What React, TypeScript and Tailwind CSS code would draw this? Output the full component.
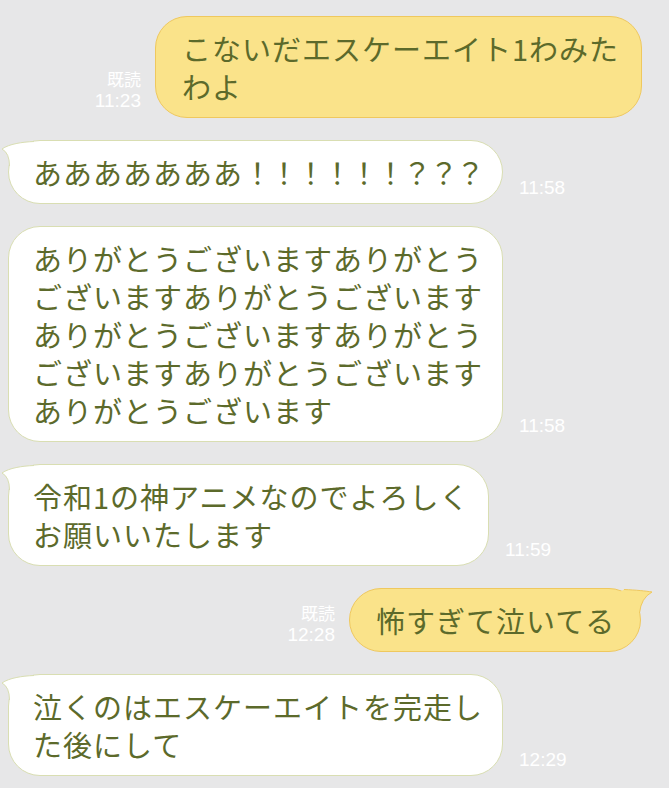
import React from "react";

const textFont = {
  fontFamily: '"Noto Sans CJK JP", "Noto Sans", sans-serif',
};

const timeFont = {
  fontFamily: '"Liberation Sans", Arial, sans-serif',
};

function LeftTail() {
  return (
    <svg
      className="absolute left-[-8px] top-0 overflow-visible"
      width="40"
      height="30"
      viewBox="0 0 40 30"
    >
      <path d="M33 0.5 C21 1 8 3 1 8 Q8.5 12 8.5 25 L20 25 L36 4 Z" fill="#ffffff" />
      <path d="M33 0.5 C21 1 8 3 1 8 Q8.5 12 8.5 25" fill="none" stroke="#d9deb2" strokeWidth="1" />
    </svg>
  );
}

function RightTail() {
  return (
    <svg
      className="absolute right-[-16px] top-0 overflow-visible"
      width="56"
      height="30"
      viewBox="0 0 56 30"
    >
      <path d="M24 0.5 C36 1 46 2 52 3 Q41 9 39.5 24 L28 24 L18 4 Z" fill="#fae38a" />
      <path d="M24 0.5 C36 1 46 2 52 3 Q41 9 39.5 24" fill="none" stroke="#efc85e" strokeWidth="1" />
    </svg>
  );
}

function Time({ t }: { t: string }) {
  return (
    <div className="mb-[5px] text-[19px] leading-[22px] text-white" style={timeFont}>
      {t}
    </div>
  );
}

function LeftMsg({
  lines,
  time,
  width,
  tail,
}: {
  lines: React.ReactNode[];
  time: string;
  width: string;
  tail?: boolean;
}) {
  return (
    <div className="flex items-end gap-[16px] pl-[8px]">
      <div
        className={`relative rounded-[32px] border border-[#d9deb2] bg-white py-[12px] pl-[24px] text-[29px] leading-[38px] tracking-[1px] text-[#5c6a2b] ${width}`}
        style={textFont}
      >
        {tail && <LeftTail />}
        {lines.map((l, i) => (
          <div key={i} className="relative whitespace-nowrap">
            {l}
          </div>
        ))}
      </div>
      <Time t={time} />
    </div>
  );
}

function RightMsg({
  lines,
  time,
  width,
  pad,
  tail,
}: {
  lines: string[];
  time: string;
  width: string;
  pad: string;
  tail?: boolean;
}) {
  return (
    <div className={`flex items-end justify-end gap-[14px] ${pad}`}>
      <div className="mb-[6px] text-right text-white">
        <div className="text-[17px] leading-[23px]" style={textFont}>
          既読
        </div>
        <div className="text-[19px] leading-[22px]" style={timeFont}>
          {time}
        </div>
      </div>
      <div
        className={`relative rounded-[32px] border border-[#efc85e] bg-[#fae38a] py-[12px] pl-[26px] text-[29px] leading-[38px] tracking-[1px] text-[#5c6a2b] ${width}`}
        style={textFont}
      >
        {tail && <RightTail />}
        {lines.map((l, i) => (
          <div key={i} className="relative whitespace-nowrap">
            {l}
          </div>
        ))}
      </div>
    </div>
  );
}

export default function App() {
  return (
    <div className="flex min-h-screen w-[669px] flex-col gap-[22px] overflow-hidden bg-[#e7e7e8] pt-[16px]">
      <RightMsg
        lines={["こないだエスケーエイト1わみた", "わよ"]}
        time="11:23"
        width="w-[487px]"
        pad="pr-[27px]"
      />
      <LeftMsg
        lines={[
          <>
            あああああああ
            <span className="tracking-[-2.4px]">！！！！！！？？？</span>
          </>,
        ]}
        time="11:58"
        width="w-[495px]"
        tail
      />
      <LeftMsg
        lines={[
          "ありがとうございますありがとう",
          "ございますありがとうございます",
          "ありがとうございますありがとう",
          "ございますありがとうございます",
          "ありがとうございます",
        ]}
        time="11:58"
        width="w-[495px]"
      />
      <LeftMsg
        lines={["令和1の神アニメなのでよろしく", "お願いいたします"]}
        time="11:59"
        width="w-[481px]"
        tail
      />
      <RightMsg
        lines={["怖すぎて泣いてる"]}
        time="12:28"
        width="w-[292px]"
        pad="pr-[28px]"
        tail
      />
      <LeftMsg
        lines={["泣くのはエスケーエイトを完走し", "た後にして"]}
        time="12:29"
        width="w-[495px]"
        tail
      />
    </div>
  );
}
